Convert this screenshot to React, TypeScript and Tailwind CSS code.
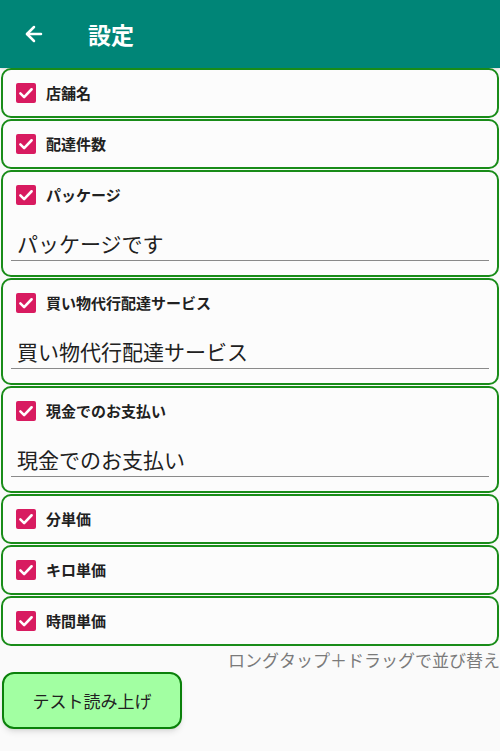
import React from "react";
import { ArrowLeft } from "lucide-react";

const items = [
  { name: "店舗名" },
  { name: "配達件数" },
  { name: "パッケージ", value: "パッケージです" },
  { name: "買い物代行配達サービス", value: "買い物代行配達サービス" },
  { name: "現金でのお支払い", value: "現金でのお支払い" },
  { name: "分単価" },
  { name: "キロ単価" },
  { name: "時間単価" },
];

function Check() {
  return (
    <span className="flex h-5 w-5 items-center justify-center rounded-[2px] bg-[#d81b60]">
      <svg viewBox="0 0 24 24" className="h-[18px] w-[18px]" fill="none" stroke="white" strokeWidth={3.4} strokeLinecap="round" strokeLinejoin="round">
        <path d="M4.5 12.5l5 5L19.5 7" />
      </svg>
    </span>
  );
}

export default function App() {
  return (
    <div
      className="h-[751px] w-[500px] overflow-hidden bg-[#fafafa] text-[#212121]"
      style={{ fontFamily: '"Noto Sans CJK JP", "Noto Sans", sans-serif' }}
    >
      {/* app bar */}
      <div className="flex h-[68px] items-center bg-[#008577] text-white shadow">
        <ArrowLeft className="ml-[22px] h-6 w-6" strokeWidth={2.5} />
        <span className="ml-[42px] text-[23px] font-bold">設定</span>
      </div>

      <div className="flex flex-col gap-px">
        {items.map((item) => (
          <div
            key={item.name}
            className="mx-px rounded-[10px] border-2 border-[#198c19] bg-[#fcfcfc]"
          >
            <div className="flex h-[46px] items-center pl-[13px]">
              <Check />
              <span className="ml-[10px] text-[15px] font-bold">{item.name}</span>
            </div>
            {item.value && (
              <div className="mx-[8px] mb-[14px] flex h-[43px] items-end border-b border-[#8a8a8a] pb-[1px] pl-[6px] text-[21px]">
                {item.value}
              </div>
            )}
          </div>
        ))}
      </div>

      <div className="mt-[3px] text-right text-[17px] leading-[22px] text-[#7a7a7a]">
        ロングタップ＋ドラッグで並び替え
      </div>

      <button className="ml-[2px] mt-[1px] h-[57px] w-[180px] rounded-[12px] border-2 border-[#0a800a] bg-[#a2ffa2] text-[17px] text-[#212121] shadow-md">
        テスト読み上げ
      </button>
    </div>
  );
}
